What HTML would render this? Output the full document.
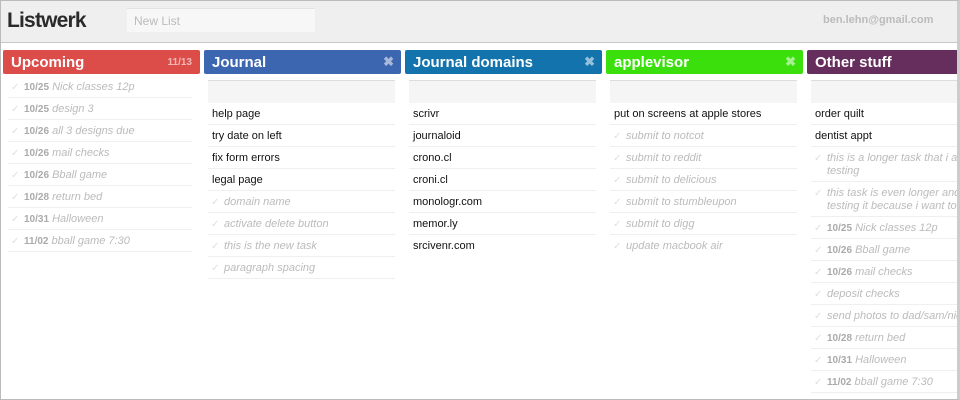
<!DOCTYPE html>
<html><head><meta charset="utf-8"><style>
*{margin:0;padding:0;box-sizing:border-box}
body{width:960px;height:400px;overflow:hidden;background:#fff;font-family:"Liberation Sans",Arial,sans-serif;position:relative}
.frame{position:absolute;left:0;top:0;width:960px;height:400px;border:1px solid #bbb;border-right:3px solid #ccc;pointer-events:none}
.top{position:absolute;left:0;top:0;width:960px;height:43px;background:#efefef;border-bottom:1px solid #c8c8c8}
.logo{position:absolute;left:7px;top:9px;font-size:21px;font-weight:bold;color:#2a2a2a;letter-spacing:-0.8px}
.nl{position:absolute;left:127px;top:8px;width:188px;height:24px;background:#f7f7f7;border-top:1px solid #e2e2e2;font-size:12px;color:#bbb;padding:5px 7px}
.em{position:absolute;left:823px;top:14px;font-size:11px;font-weight:bold;color:#bbb;white-space:nowrap}
.col{position:absolute;top:50px;width:197px}
.hd{height:24px;border-radius:2px;color:#fff;font-weight:bold;font-size:15px;padding:4px 8px 0;position:relative}
.hd .x{position:absolute;right:7px;top:4px;font-size:13px;color:rgba(255,255,255,.55)}
.hd .c{position:absolute;right:8px;top:7px;font-size:10px;color:rgba(255,255,255,.6)}
.list{margin:6px 6px 0 4px}
.inp{height:23px;background:#f5f5f5;border-top:1px solid #ddd}
.it{min-height:22px;border-bottom:1px solid #efefef;font-size:11px;color:#111;padding:5px 4px 0 4px;line-height:13px}
.d{color:#bbb;font-style:italic;padding-left:16px;position:relative}
.d:before{content:"\2713";position:absolute;left:3px;top:5px;color:#e0e0e0;font-style:normal;font-size:10px}
.d b{color:#aaa;font-style:normal;font-size:10px}
.tall{min-height:35px}
</style></head><body>
<div class="top"><div class="logo">Listwerk</div><div class="nl">New List</div><div class="em">ben.lehn@gmail.com</div></div>

<div class="col" style="left:3px"><div class="hd" style="background:#dc4d4a">Upcoming<span class="c">11/13</span></div>
<div class="list" style="margin-top:2px;margin-left:5px;margin-right:8px">
<div class="it d"><b>10/25</b> Nick classes 12p</div>
<div class="it d"><b>10/25</b> design 3</div>
<div class="it d"><b>10/26</b> all 3 designs due</div>
<div class="it d"><b>10/26</b> mail checks</div>
<div class="it d"><b>10/26</b> Bball game</div>
<div class="it d"><b>10/28</b> return bed</div>
<div class="it d"><b>10/31</b> Halloween</div>
<div class="it d"><b>11/02</b> bball game 7:30</div>
</div></div>

<div class="col" style="left:204px"><div class="hd" style="background:#3d66b0">Journal<span class="x">✖</span></div>
<div class="list"><div class="inp"></div>
<div class="it">help page</div><div class="it">try date on left</div><div class="it">fix form errors</div><div class="it">legal page</div>
<div class="it d">domain name</div><div class="it d">activate delete button</div><div class="it d">this is the new task</div><div class="it d">paragraph spacing</div>
</div></div>

<div class="col" style="left:405px"><div class="hd" style="background:#1273ad">Journal domains<span class="x">✖</span></div>
<div class="list"><div class="inp"></div>
<div class="it">scrivr</div><div class="it">journaloid</div><div class="it">crono.cl</div><div class="it">croni.cl</div><div class="it">monologr.com</div><div class="it">memor.ly</div><div class="it" style="border:0">srcivenr.com</div>
</div></div>

<div class="col" style="left:606px"><div class="hd" style="background:#3be00c">applevisor<span class="x">✖</span></div>
<div class="list"><div class="inp"></div>
<div class="it">put on screens at apple stores</div>
<div class="it d">submit to notcot</div><div class="it d">submit to reddit</div><div class="it d">submit to delicious</div><div class="it d">submit to stumbleupon</div><div class="it d">submit to digg</div><div class="it d" style="border:0">update macbook air</div>
</div></div>

<div class="col" style="left:807px;width:170px"><div class="hd" style="background:#652e5c">Other stuff</div>
<div class="list" style="white-space:nowrap;overflow:hidden;margin-right:0"><div class="inp"></div>
<div class="it">order quilt</div><div class="it">dentist appt</div>
<div class="it d tall">this is a longer task that i am<br>testing</div>
<div class="it d tall">this task is even longer and i<br>testing it because i want to</div>
<div class="it d"><b>10/25</b> Nick classes 12p</div>
<div class="it d"><b>10/26</b> Bball game</div>
<div class="it d"><b>10/26</b> mail checks</div>
<div class="it d">deposit checks</div>
<div class="it d">send photos to dad/sam/nick</div>
<div class="it d"><b>10/28</b> return bed</div>
<div class="it d"><b>10/31</b> Halloween</div>
<div class="it d"><b>11/02</b> bball game 7:30</div>
</div></div>
<div class="frame"></div>
</body></html>
